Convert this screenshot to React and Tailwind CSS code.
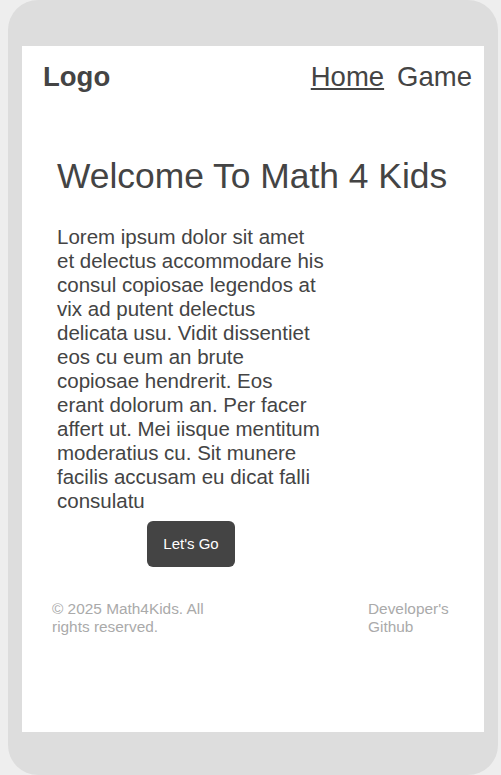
const LINES = [
  'Lorem ipsum dolor sit amet',
  'et delectus accommodare his',
  'consul copiosae legendos at',
  'vix ad putent delectus',
  'delicata usu. Vidit dissentiet',
  'eos cu eum an brute',
  'copiosae hendrerit. Eos',
  'erant dolorum an. Per facer',
  'affert ut. Mei iisque mentitum',
  'moderatius cu. Sit munere',
  'facilis accusam eu dicat falli',
  'consulatu',
];

export default function App() {
  return (
    <div className="min-h-screen bg-[#eeeeee] pl-[8px]" style={{ fontFamily: '"Liberation Sans", Arial, sans-serif' }}>
      <div className="w-[490px] h-[775px] rounded-[30px] bg-[#dddddd] pt-[46px] px-[14px]">
        <div className="h-[686px] bg-white text-[#444444]">
          {/* header */}
          <header className="flex items-center justify-between pt-[15px] pl-[21px] pr-[12px]">
            <span className="text-[27.5px] leading-[32px] font-bold">Logo</span>
            <nav className="flex gap-[13px] text-[27.5px] leading-[32px]">
              <a href="#" className="underline">Home</a>
              <a href="#">Game</a>
            </nav>
          </header>

          {/* hero */}
          <main className="pl-[35px] pt-[63px]">
            <h1 className="text-[35.4px] leading-[40px]">Welcome To Math 4 Kids</h1>
            <div className="w-[268px] mt-[29px]">
              <p className="text-[20.5px] leading-[24px] whitespace-nowrap">
                {LINES.map((line, i) => (
                  <span key={i} className="block">{line}</span>
                ))}
              </p>
              <div className="flex justify-center mt-[8px]">
                <button className="w-[88px] h-[46px] rounded-[6px] bg-[#444444] text-white text-[15px]">
                  Let's Go
                </button>
              </div>
            </div>
          </main>

          {/* footer */}
          <footer className="flex justify-between px-[30px] pt-[33px] text-[15.4px] leading-[18px] text-[#aaaaaa]">
            <p className="w-[165px]">© 2025 Math4Kids. All rights reserved.</p>
            <a href="#" className="w-[86px]">Developer's Github</a>
          </footer>
        </div>
      </div>
    </div>
  );
}
